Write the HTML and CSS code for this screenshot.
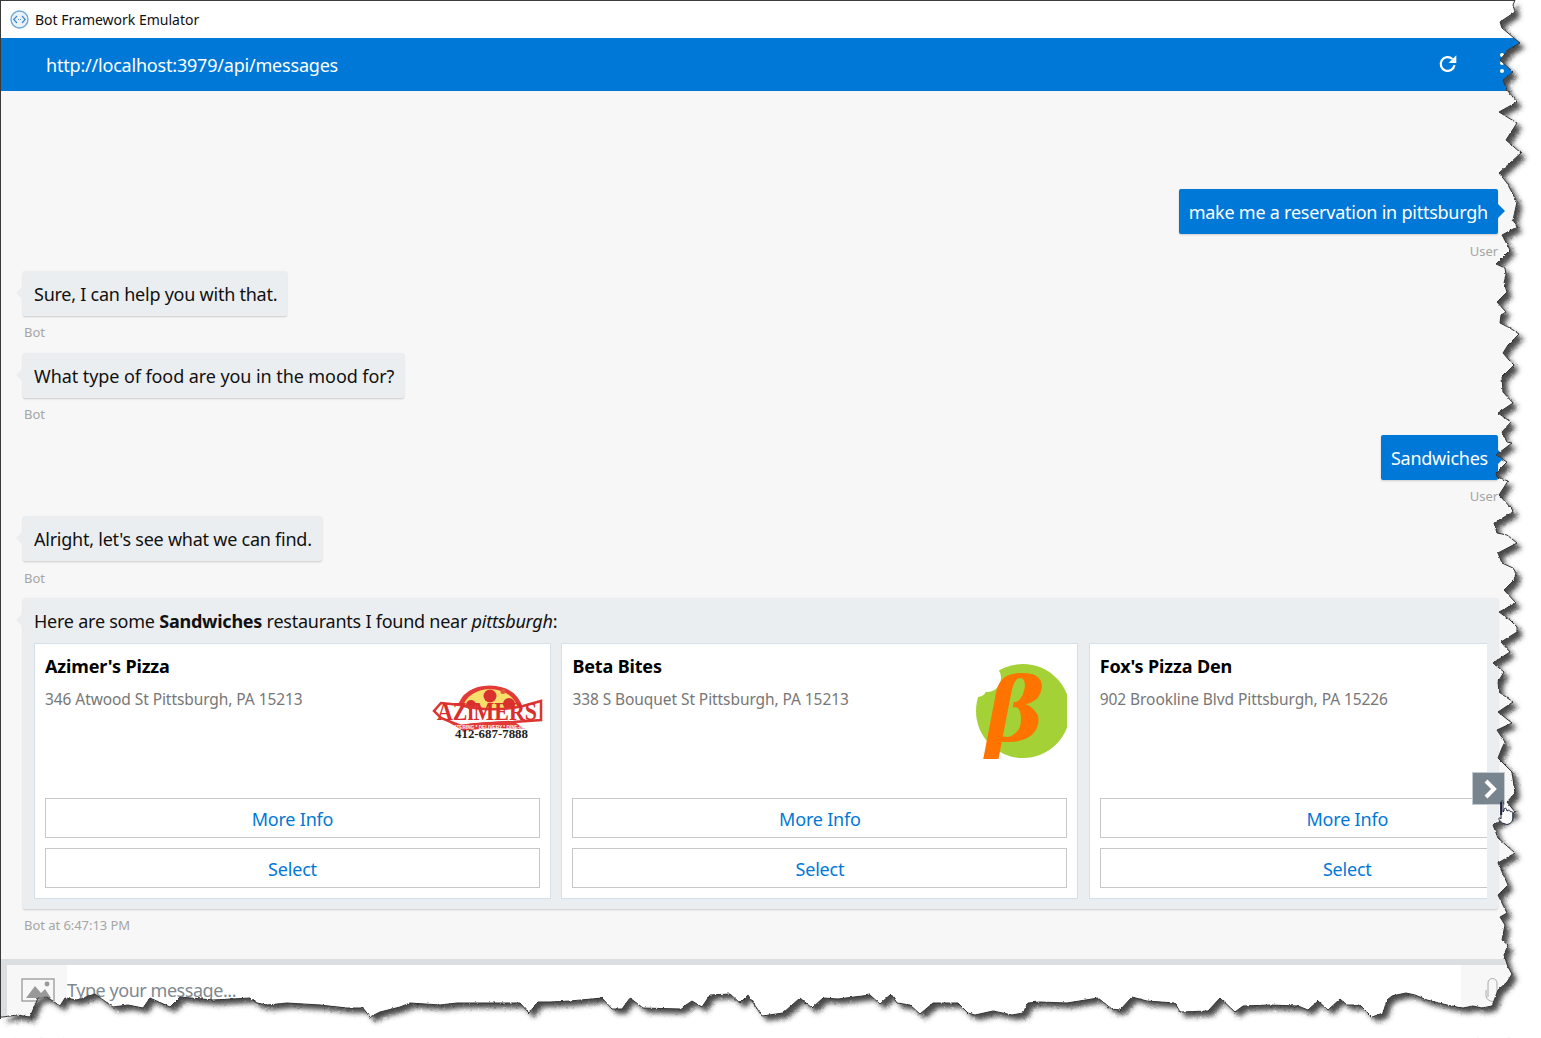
FILE: index.html
```html
<!DOCTYPE html>
<html lang="en">
<head>
<meta charset="utf-8">
<title>Bot Framework Emulator</title>
<link rel="stylesheet" href="styles.css">
</head>
<body>
<div class="app">
  <div class="titlebar">
    <svg class="title-icon" width="19" height="19" viewBox="0 0 19 19"><circle cx="9.5" cy="9.5" r="8.5" fill="#eaf3fb" stroke="#6fa8dc" stroke-width="1.4"/><path d="M7 6 3.8 9.5 7 13M12 6l3.2 3.5L12 13" fill="none" stroke="#3f86c6" stroke-width="1.2"/><path d="M8 9.5h.9M10.1 9.5h.9" stroke="#3f86c6" stroke-width="1.2"/></svg>
    <span class="title-text">Bot Framework Emulator</span>
  </div>
  <header class="urlbar">
    <span class="url">http://localhost:3979/api/messages</span>
    <svg class="refresh" width="20" height="20" viewBox="0 0 18 18"><path d="M14.8 10a6.2 6.2 0 1 1-1.9-5.5" fill="none" stroke="#fff" stroke-width="2"/><path d="M16.5 1.2v7h-7z" fill="#fff"/></svg>
    <div class="kebab"><i></i><i></i><i></i></div>
  </header>
  <main class="chat">
    <div class="msg user"><div class="bubble">make me a reservation in pittsburgh</div><div class="sender">User</div></div>
    <div class="msg bot"><div class="bubble">Sure, I can help you with that.</div><div class="sender">Bot</div></div>
    <div class="msg bot"><div class="bubble loose">What type of food are you in the mood for?</div><div class="sender">Bot</div></div>
    <div class="msg user"><div class="bubble">Sandwiches</div><div class="sender">User</div></div>
    <div class="msg bot"><div class="bubble">Alright, let's see what we can find.</div><div class="sender">Bot</div></div>
    <div class="msg bot wide">
      <div class="bubble carousel">
        <p class="intro">Here are some <b>Sandwiches</b> restaurants I found near <em>pittsburgh</em>:</p>
        <div class="cards">
          <article class="card">
            <div class="card-top">
              <div class="card-text"><h3>Azimer's Pizza</h3><p>346 Atwood St Pittsburgh, PA 15213</p></div>
              <svg class="logo logo-az" width="108" height="56" viewBox="0 0 108 56">
                <path d="M24 24Q30 2 57 1.500Q83 2 90 24Z" fill="#e23a37"/>
                <path d="M29 24Q35 6 57 5Q79 6 85 24Z" fill="#f8df6c"/>
                <circle cx="57" cy="12" r="6.500" fill="#d8312f"/>
                <circle cx="38" cy="21" r="5" fill="#d8312f"/><circle cx="76" cy="20" r="6" fill="#d8312f"/><circle cx="70" cy="7.500" r="2.500" fill="#e25a3a"/>
                <path d="M8 19 27 21Q57 29 90 22L108 17V36L80 38Q50 39 28 42L8 34 1 27Z" fill="#fff" stroke="#dd3532" stroke-width="2.500"/>
                <path d="M12 36 28 41Q52 38 80 37L92 45Q55 43 30 47Z" fill="#e23a37"/>
                <text x="4" y="36" class="az-name" textLength="100" lengthAdjust="spacingAndGlyphs">AZiMERS</text>
                <text x="17" y="45" class="az-sub" textLength="74" lengthAdjust="spacingAndGlyphs">CATERING * DELIVERY * DINE-IN</text>
                <text x="22" y="54" class="az-tel" textLength="73" lengthAdjust="spacingAndGlyphs">412-687-7888</text>
              </svg>
            </div>
            <button class="btn">More Info</button>
            <button class="btn">Select</button>
          </article>
          <article class="card">
            <div class="card-top">
              <div class="card-text"><h3>Beta Bites</h3><p>338 S Bouquet St Pittsburgh, PA 15213</p></div>
              <svg class="logo logo-beta" width="90" height="100" viewBox="0 0 90 100">
                <circle cx="46" cy="49" r="47" fill="#a4d136"/>
                <rect x="90" y="0" width="6" height="100" fill="#fff"/>
                <circle cx="10" cy="16" r="14" fill="#fff"/><circle cx="1" cy="26" r="9" fill="#fff"/>
                <circle cx="85" cy="5" r="12" fill="#fff"/><circle cx="85" cy="94" r="12" fill="#fff"/><circle cx="62" cy="99" r="5" fill="#fff"/>
                <text x="9" y="79" class="beta-glyph">β</text>
              </svg>
            </div>
            <button class="btn">More Info</button>
            <button class="btn">Select</button>
          </article>
          <article class="card">
            <div class="card-top">
              <div class="card-text"><h3>Fox's Pizza Den</h3><p>902 Brookline Blvd Pittsburgh, PA 15226</p></div>
            </div>
            <button class="btn">More Info</button>
            <button class="btn">Select</button>
          </article>
        </div>
        <button class="next"><svg width="16" height="20" viewBox="0 0 16 20"><path d="M3 2l8 8-8 8" fill="none" stroke="#fff" stroke-width="4"/></svg></button>
      </div>
      <div class="sender">Bot at 6:47:13 PM</div>
    </div>
  </main>
  <footer class="composer">
    <div class="upload"><svg width="34" height="24" viewBox="0 0 34 24"><rect x="1" y="1" width="32" height="22" fill="none" stroke="#999" stroke-width="1.300"/><path d="M5 20 14 8l6 7 4-4 6 9z" fill="#999"/><circle cx="26" cy="6" r="2.400" fill="#999"/></svg></div>
    <div class="placeholder">Type your message...</div>
    <div class="attach"><svg width="14" height="26" viewBox="0 0 14 26"><path d="M3 19V5a4.500 4.500 0 0 1 9 0v15a3.500 3.500 0 0 1-4 3.500Q2 23 1 18V12" fill="none" stroke="#aaa" stroke-width="1"/></svg></div>
  </footer>
</div>

<svg class="tear" width="1541" height="1038" viewBox="0 0 1541 1038">
  <defs>
    <path id="edge" d="M1515 0 1513 5 1515 12 1500 22 1502 28 1508 33 1520 43 1509 49 1500 60 1513 72 1503 80 1507 90 1517 102 1499 112 1517 123 1506 140 1521 153 1499 173 1507 183 1517 202 1513 220 1517 227 1502 235 1510 250 1496 264 1505 268 1506 275 1504 283 1507 292 1497 302 1506 312 1501 315 1500 323 1510 328 1519 334 1508 345 1503 353 1509 360 1514 365 1502 377 1503 392 1513 403 1498 413 1511 422 1502 432 1507 442 1512 443 1496 455 1507 462 1496 473 1497 477 1508 481 1499 495 1512 509 1513 512 1494 523 1497 533 1507 535 1517 543 1498 553 1502 563 1513 568 1516 573 1514 580 1504 590 1516 603 1499 612 1510 620 1517 627 1517 632 1501 642 1510 652 1493 663 1504 672 1498 682 1499 692 1513 702 1498 712 1512 723 1497 730 1505 742 1502 748 1498 758 1508 768 1512 772 1515 793 1507 802 1515 812 1493 825 1498 838 1515 853 1498 863 1508 885 1498 895 1507 913 1500 917 1505 925 1502 940 1508 945 1504 955 1508 967 1512 974 1507 982 1498 990 1492 1006 1482 1008 1473 1006 1463 1008 1457 1007 1447 1005 1435 1002 1427 1000 1415 995 1406 993 1392 996 1387 1000 1383 1013 1372 1017 1360 1005 1347 1005 1340 999 1328 1010 1318 1001 1308 1010 1298 1006 1270 1005 1243 1006 1235 1012 1220 998 1208 1011 1180 1012 1175 1003 1147 1001 1132 997 1120 1010 1112 1009 1098 998 1067 1003 1040 1002 1028 1003 1023 1013 1012 1015 993 1011 975 1015 968 1013 958 1003 933 1003 920 1014 910 1005 897 1003 891 994 880 1004 870 995 838 999 823 998 812 1008 800 998 783 1013 762 1016 748 995 740 1003 730 994 710 995 702 1007 692 1001 680 1009 643 1008 630 998 622 1009 612 1009 602 998 570 1001 550 1002 538 1002 529 1013 520 1003 457 1003 440 1005 410 1003 400 1007 380 1012 370 1017 363 1008 347 1008 320 1005 287 1003 267 1005 257 1003 250 998 213 1000 180 997 170 1007 150 998 143 1008 128 1005 113 1007 95 994 77 1000 65 998 60 1006 47 997 38 998 30 1017 17 1015 3 1017 0 1017"/>
    <clipPath id="outside"><path d="M1515 0 1541 0 1541 1038 0 1038 0 1017 3 1017 17 1015 30 1017 38 998 47 997 60 1006 65 998 77 1000 95 994 113 1007 128 1005 143 1008 150 998 170 1007 180 997 213 1000 250 998 257 1003 267 1005 287 1003 320 1005 347 1008 363 1008 370 1017 380 1012 400 1007 410 1003 440 1005 457 1003 520 1003 529 1013 538 1002 550 1002 570 1001 602 998 612 1009 622 1009 630 998 643 1008 680 1009 692 1001 702 1007 710 995 730 994 740 1003 748 995 762 1016 783 1013 800 998 812 1008 823 998 838 999 870 995 880 1004 891 994 897 1003 910 1005 920 1014 933 1003 958 1003 968 1013 975 1015 993 1011 1012 1015 1023 1013 1028 1003 1040 1002 1067 1003 1098 998 1112 1009 1120 1010 1132 997 1147 1001 1175 1003 1180 1012 1208 1011 1220 998 1235 1012 1243 1006 1270 1005 1298 1006 1308 1010 1318 1001 1328 1010 1340 999 1347 1005 1360 1005 1372 1017 1383 1013 1387 1000 1392 996 1406 993 1415 995 1427 1000 1435 1002 1447 1005 1457 1007 1463 1008 1473 1006 1482 1008 1492 1006 1498 990 1507 982 1512 974 1508 967 1504 955 1508 945 1502 940 1505 925 1500 917 1507 913 1498 895 1508 885 1498 863 1515 853 1498 838 1493 825 1515 812 1507 802 1515 793 1512 772 1508 768 1498 758 1502 748 1505 742 1497 730 1512 723 1498 712 1513 702 1499 692 1498 682 1504 672 1493 663 1510 652 1501 642 1517 632 1517 627 1510 620 1499 612 1516 603 1504 590 1514 580 1516 573 1513 568 1502 563 1498 553 1517 543 1507 535 1497 533 1494 523 1513 512 1512 509 1499 495 1508 481 1497 477 1496 473 1507 462 1496 455 1512 443 1507 442 1502 432 1511 422 1498 413 1513 403 1503 392 1502 377 1514 365 1509 360 1503 353 1508 345 1519 334 1510 328 1500 323 1501 315 1506 312 1497 302 1507 292 1504 283 1506 275 1505 268 1496 264 1510 250 1502 235 1517 227 1513 220 1517 202 1507 183 1499 173 1521 153 1506 140 1517 123 1499 112 1517 102 1507 90 1503 80 1513 72 1500 60 1509 49 1520 43 1508 33 1502 28 1500 22 1515 12 1513 5Z"/></clipPath>
    <filter id="soft" x="-5%" y="-5%" width="110%" height="110%"><feGaussianBlur stdDeviation="2.600"/></filter>
    <filter id="rough" x="0" y="0" width="1541" height="1038" filterUnits="userSpaceOnUse" primitiveUnits="userSpaceOnUse" color-interpolation-filters="sRGB"><feTurbulence type="fractalNoise" baseFrequency="0.3" numOctaves="2" seed="7" stitchTiles="noStitch"/><feDisplacementMap in="SourceGraphic" scale="2.500" xChannelSelector="R" yChannelSelector="G"/></filter>
  </defs>
  <g filter="url(#rough)">
    <g clip-path="url(#outside)">
      <rect width="1541" height="1038" fill="#fff"/>
      <use href="#edge" class="tear-shadow" transform="translate(5 5)"/>
    </g>
    <use href="#edge" class="tear-line"/>
  </g>
</svg>
<svg class="hand" width="18" height="26" viewBox="0 0 18 26"><path d="M3 1.500c1-1 2-.5 2 .5v10l1-1V9c1-1 2-1 2.500 0l.5 2 1-.5c1-.7 2-.2 2 .8l.8.5c1-.5 2 0 2 1V19q-1 5-6 5.500Q4 24 .8 19.500c-.5-1 .5-2 1.500-1.200L3 19Z" fill="#fff" stroke="#1c2340" stroke-width="1"/><path d="M3.200 2v13" stroke="#1c2340" stroke-width="2"/></svg>
</body>
</html>
```

FILE: styles.css
```css
* { box-sizing: border-box; }
html, body { margin: 0; padding: 0; }
body {
  position: relative;
  width: 1541px;
  height: 1038px;
  overflow: hidden;
  background: #fff;
  font-family: "Noto Sans", "Open Sans", sans-serif;
  color: #111;
}
.app {
  width: 1522px;
  height: 1038px;
  display: flex;
  flex-direction: column;
  border-left: 1px solid #3a3a3a;
  border-top: 1px solid #3a3a3a;
  background: #f7f7f7;
}
.titlebar {
  height: 37px;
  flex: none;
  display: flex;
  align-items: center;
  padding-left: 9px;
  gap: 6px;
  background: #fff;
}
.title-text { font-size: 14px; }
.urlbar {
  height: 53px;
  flex: none;
  display: flex;
  align-items: center;
  padding-left: 45px;
  background: #0078d7;
  color: #fff;
}
.url { font-size: 18px; letter-spacing: -.2px; flex: 1; }
.refresh { margin-right: 42px; margin-top: -2px; }
.kebab { display: flex; flex-direction: column; gap: 4px; margin-right: 18px; margin-top: -3px; }
.kebab i { width: 4px; height: 4px; border-radius: 50%; background: #fff; }
.chat {
  flex: 1;
  min-height: 0;
  display: flex;
  flex-direction: column;
  justify-content: flex-end;
  padding: 0 24px 25.800px 22px;
}
.msg { display: flex; flex-direction: column; margin-top: 11.8px; }
.msg.user { align-items: flex-end; }
.msg.bot { align-items: flex-start; }
.bubble {
  position: relative;
  padding: 11px 10px 9px;
  font-size: 18px;
  letter-spacing: -.24px;
  line-height: 25px;
  border-radius: 2px;
}
.bubble.loose { letter-spacing: -.08px; }
.bubble::before {
  content: "";
  position: absolute;
  top: 15px;
  border: 7.500px solid transparent;
}
.bot .bubble { padding-left: 11px; background: #ebeef0; box-shadow: 0 1px 2px rgba(0, 0, 0, .18); }
.bot .bubble::before { left: -14px; border-right-color: #ebeef0; }
.user .bubble { background: #0078d7; color: #fff; box-shadow: 0 1px 2px rgba(0, 0, 0, .18); }
.user .bubble::before { right: -14px; border-left-color: #0078d7; }
.sender {
  font-size: 13px;
  letter-spacing: -.05px;
  line-height: 17px;
  height: 16.600px;
  margin-top: 8.400px;
  color: #a5a5a5;
}
.wide .sender { height: 16.100px; margin-top: 7.900px; }
.bot .sender { padding-left: 1px; }
.wide { align-self: stretch; }
.bot .carousel { width: 100%; padding: 11px 11px 10px; }
.intro { margin: 0 0 9px; }
.intro em { font-style: italic; }
.cards { display: flex; gap: 10.400px; overflow: hidden; }
.card {
  flex: none;
  width: 517px;
  height: 256px;
  padding: 10px;
  display: flex;
  flex-direction: column;
  gap: 10px;
  background: #fff;
  border: 1px solid #d5dfe8;
  letter-spacing: 0;
}
.card-top { flex: 1; display: flex; justify-content: space-between; align-items: flex-start; }
.card-text h3 { margin: 0; font-size: 18px; letter-spacing: -.15px; line-height: 25px; font-weight: 700; color: #000; }
.card-text p { margin: 9px 0 0; font-size: 15.500px; letter-spacing: -.08px; line-height: 22px; color: #777; }
.logo { overflow: visible; }
.logo-az { margin-top: 30px; margin-right: -1px; }
.logo-beta { margin-top: 8px; }
.btn {
  flex: none;
  height: 40px;
  width: 100%;
  border: 1px solid #c8c8c8;
  background: #fff;
  color: #0078d7;
  font: 18px "Noto Sans", "Open Sans", sans-serif;
  letter-spacing: -.2px;
  padding: 2px 0 0;
}
.az-name { font: 700 25px "Liberation Serif", serif; fill: #d92f2c; }
.az-sub { font: 700 4.500px "Liberation Sans", sans-serif; fill: #fff; }
.az-tel { font: 700 12px "Liberation Serif", serif; fill: #222; }
.beta-glyph { font: italic 700 88px "DejaVu Serif", serif; fill: #ff7300; }
.next {
  position: absolute;
  right: -7px;
  top: 174px;
  width: 33px;
  height: 33px;
  padding: 1px 0 0 4px;
  display: flex;
  align-items: center;
  justify-content: center;
  background: #78858f;
  border: 1px solid #c4cbd0;
}
.composer {
  flex: none;
  height: 79px;
  display: flex;
  background: #fff;
  border-top: 6px solid #dbdfe2;
  border-left: 6px solid #dbdfe2;
}
.upload { width: 60px; flex: none; background: #f7f7f7; padding: 13px 0 0 14px; }
.placeholder { flex: 1; font-size: 18px; letter-spacing: -.45px; line-height: 25px; padding-top: 13px; color: #808890; }
.attach { width: 61px; flex: none; background: #f7f7f7; padding: 13px 0 0 24px; }
.tear { position: absolute; left: 0; top: 0; pointer-events: none; }
.tear-shadow { fill: #4a4a4a; filter: url(#soft); }
.tear-line { fill: none; stroke: #333; stroke-width: 1; }
.hand { position: absolute; left: 1498px; top: 800px; }
```
